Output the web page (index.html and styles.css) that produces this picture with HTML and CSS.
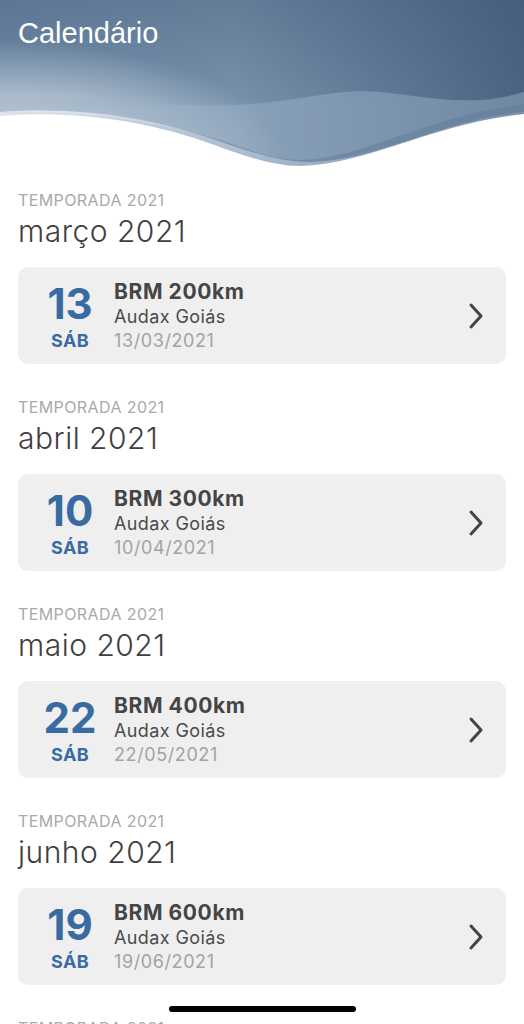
FILE: index.html
```html
<!DOCTYPE html>
<html lang="pt-BR">
<head>
  <meta charset="UTF-8">
  <meta name="viewport" content="width=device-width, initial-scale=1.0">
  <title>Calendário</title>
  <link rel="stylesheet" href="styles.css">
</head>
<body>
  <div class="screen">
    <!-- Header with waves -->
    <div class="header">
      <svg class="header-bg" viewBox="0 0 524 180" preserveAspectRatio="none">
        <defs>
          <linearGradient id="sky" x1="0" y1="0" x2="1" y2="0">
            <stop offset="0" stop-color="#6d89a6"/>
            <stop offset="0.45" stop-color="#7893ad"/>
            <stop offset="1" stop-color="#4a6483"/>
          </linearGradient>
          <linearGradient id="shade" x1="0" y1="0" x2="0" y2="1">
            <stop offset="0" stop-color="#3c5372" stop-opacity="0.35"/>
            <stop offset="0.6" stop-color="#3c5372" stop-opacity="0"/>
          </linearGradient>
          <radialGradient id="glow" cx="0" cy="0.72" r="0.55" gradientTransform="scale(1 1.3)">
            <stop offset="0" stop-color="#ffffff" stop-opacity="1"/>
            <stop offset="0.45" stop-color="#ffffff" stop-opacity="0.55"/>
            <stop offset="1" stop-color="#ffffff" stop-opacity="0"/>
          </radialGradient>
          <linearGradient id="band" x1="0" y1="0" x2="1" y2="0">
            <stop offset="0" stop-color="#ffffff" stop-opacity="0.7"/>
            <stop offset="0.5" stop-color="#c6d3df" stop-opacity="0.6"/>
            <stop offset="1" stop-color="#8ca3bb" stop-opacity="0.5"/>
          </linearGradient>
        </defs>
        <rect width="524" height="180" fill="url(#sky)"/>
        <rect width="524" height="180" fill="url(#shade)"/>
        <rect width="524" height="180" fill="url(#glow)"/>
        <path d="M0,98 C90,96 170,110 250,104 C310,99 340,88 380,92 C430,97 470,108 524,92 L524,180 L0,180 Z" fill="#9fb3c7" opacity="0.45"/>
        <path d="M0,112 C80,110 160,122 220,140 C255,152 275,160 300,160 C360,160 420,118 524,104 L524,180 L0,180 Z" fill="#5e7b9a" opacity="0.45"/>
        <path d="M0,112 C80,106 150,118 210,138 C250,152 280,162 310,162 C380,160 440,120 524,112 L524,180 L0,180 Z" fill="url(#band)"/>
        <path d="M0,116 C70,110 140,120 200,140 C240,154 270,166 300,166 C370,164 430,124 524,114 L524,180 L0,180 Z" fill="#ffffff"/>
      </svg>
      <h1 class="page-title">Calendário</h1>
    </div>

    <!-- Calendar list -->
    <div class="calendar">
      <div class="month">
        <div class="season">Temporada 2021</div>
        <h2 class="month-name">março 2021</h2>
        <div class="event-card">
          <div class="event-day">
            <span class="day-num">13</span>
            <span class="day-week">SÁB</span>
          </div>
          <div class="event-info">
            <div class="event-title">BRM 200km</div>
            <div class="event-club">Audax Goiás</div>
            <div class="event-date">13/03/2021</div>
          </div>
          <svg class="chevron" viewBox="0 0 16 28"><polyline points="3,3 13,14 3,25"/></svg>
        </div>
      </div>

      <div class="month">
        <div class="season">Temporada 2021</div>
        <h2 class="month-name">abril 2021</h2>
        <div class="event-card">
          <div class="event-day">
            <span class="day-num">10</span>
            <span class="day-week">SÁB</span>
          </div>
          <div class="event-info">
            <div class="event-title">BRM 300km</div>
            <div class="event-club">Audax Goiás</div>
            <div class="event-date">10/04/2021</div>
          </div>
          <svg class="chevron" viewBox="0 0 16 28"><polyline points="3,3 13,14 3,25"/></svg>
        </div>
      </div>

      <div class="month">
        <div class="season">Temporada 2021</div>
        <h2 class="month-name">maio 2021</h2>
        <div class="event-card">
          <div class="event-day">
            <span class="day-num">22</span>
            <span class="day-week">SÁB</span>
          </div>
          <div class="event-info">
            <div class="event-title">BRM 400km</div>
            <div class="event-club">Audax Goiás</div>
            <div class="event-date">22/05/2021</div>
          </div>
          <svg class="chevron" viewBox="0 0 16 28"><polyline points="3,3 13,14 3,25"/></svg>
        </div>
      </div>

      <div class="month">
        <div class="season">Temporada 2021</div>
        <h2 class="month-name">junho 2021</h2>
        <div class="event-card">
          <div class="event-day">
            <span class="day-num">19</span>
            <span class="day-week">SÁB</span>
          </div>
          <div class="event-info">
            <div class="event-title">BRM 600km</div>
            <div class="event-club">Audax Goiás</div>
            <div class="event-date">19/06/2021</div>
          </div>
          <svg class="chevron" viewBox="0 0 16 28"><polyline points="3,3 13,14 3,25"/></svg>
        </div>
      </div>

      <div class="month">
        <div class="season">Temporada 2021</div>
        <h2 class="month-name">julho 2021</h2>
      </div>
    </div>

    <!-- Home indicator -->
    <div class="home-indicator"></div>
  </div>
</body>
</html>
```

FILE: styles.css
```css
/* Reset and Base Styles */
* {
  margin: 0;
  padding: 0;
  box-sizing: border-box;
}

body {
  background: #ffffff;
  font-family: Inter, "Noto Sans", Arial, sans-serif;
  color: #444;
  overflow: hidden;
}

.screen {
  width: 100%;
  height: 100vh;
  overflow: hidden;
}

/* Header */
.header {
  position: relative;
  height: 191px;
}

.header-bg {
  display: block;
  width: 100%;
  height: 180px;
}

.page-title {
  position: absolute;
  top: 17px;
  left: 18px;
  font-family: "Liberation Sans", Arial, sans-serif;
  font-size: 29px;
  font-weight: 400;
  color: #ffffff;
}

/* Month sections */
.calendar {
  padding: 0 18px;
}

.month {
  padding-bottom: 34px;
}

.season {
  font-size: 16px;
  line-height: 18px;
  letter-spacing: 0.4px;
  text-transform: uppercase;
  color: #a9a9a9;
  margin-bottom: 4px;
}

.month-name {
  font-size: 30px;
  line-height: 36px;
  font-weight: 300;
  letter-spacing: 0.5px;
  color: #3f3f3f;
  margin-bottom: 18px;
}

/* Event card */
.event-card {
  display: flex;
  align-items: center;
  height: 97px;
  padding: 0 22px 0 20px;
  background: #efefef;
  border-radius: 10px;
}

.event-day {
  display: flex;
  flex-direction: column;
  align-items: center;
  width: 64px;
  padding-top: 4px;
  margin-right: 12px;
  color: #3a6aa2;
  font-weight: 700;
}

.day-num {
  font-size: 42px;
  line-height: 42px;
}

.day-week {
  margin-top: 4px;
  font-size: 18px;
  line-height: 24px;
  letter-spacing: 0.3px;
}

.event-info {
  flex: 1;
  padding-top: 2px;
}

.event-title {
  font-size: 21px;
  line-height: 24px;
  font-weight: 700;
  letter-spacing: 0.6px;
  color: #454545;
}

.event-club {
  font-size: 18px;
  line-height: 25px;
  letter-spacing: 0.4px;
  color: #4a4a4a;
}

.event-date {
  font-size: 18px;
  line-height: 24px;
  letter-spacing: 0.6px;
  color: #a3a3a3;
}

.chevron {
  width: 16px;
  height: 28px;
  fill: none;
  stroke: #444;
  stroke-width: 3;
  stroke-linecap: round;
  stroke-linejoin: round;
}

/* Home indicator */
.home-indicator {
  position: fixed;
  left: 169px;
  bottom: 12px;
  width: 187px;
  height: 6px;
  border-radius: 3px;
  background: #000;
}
```
